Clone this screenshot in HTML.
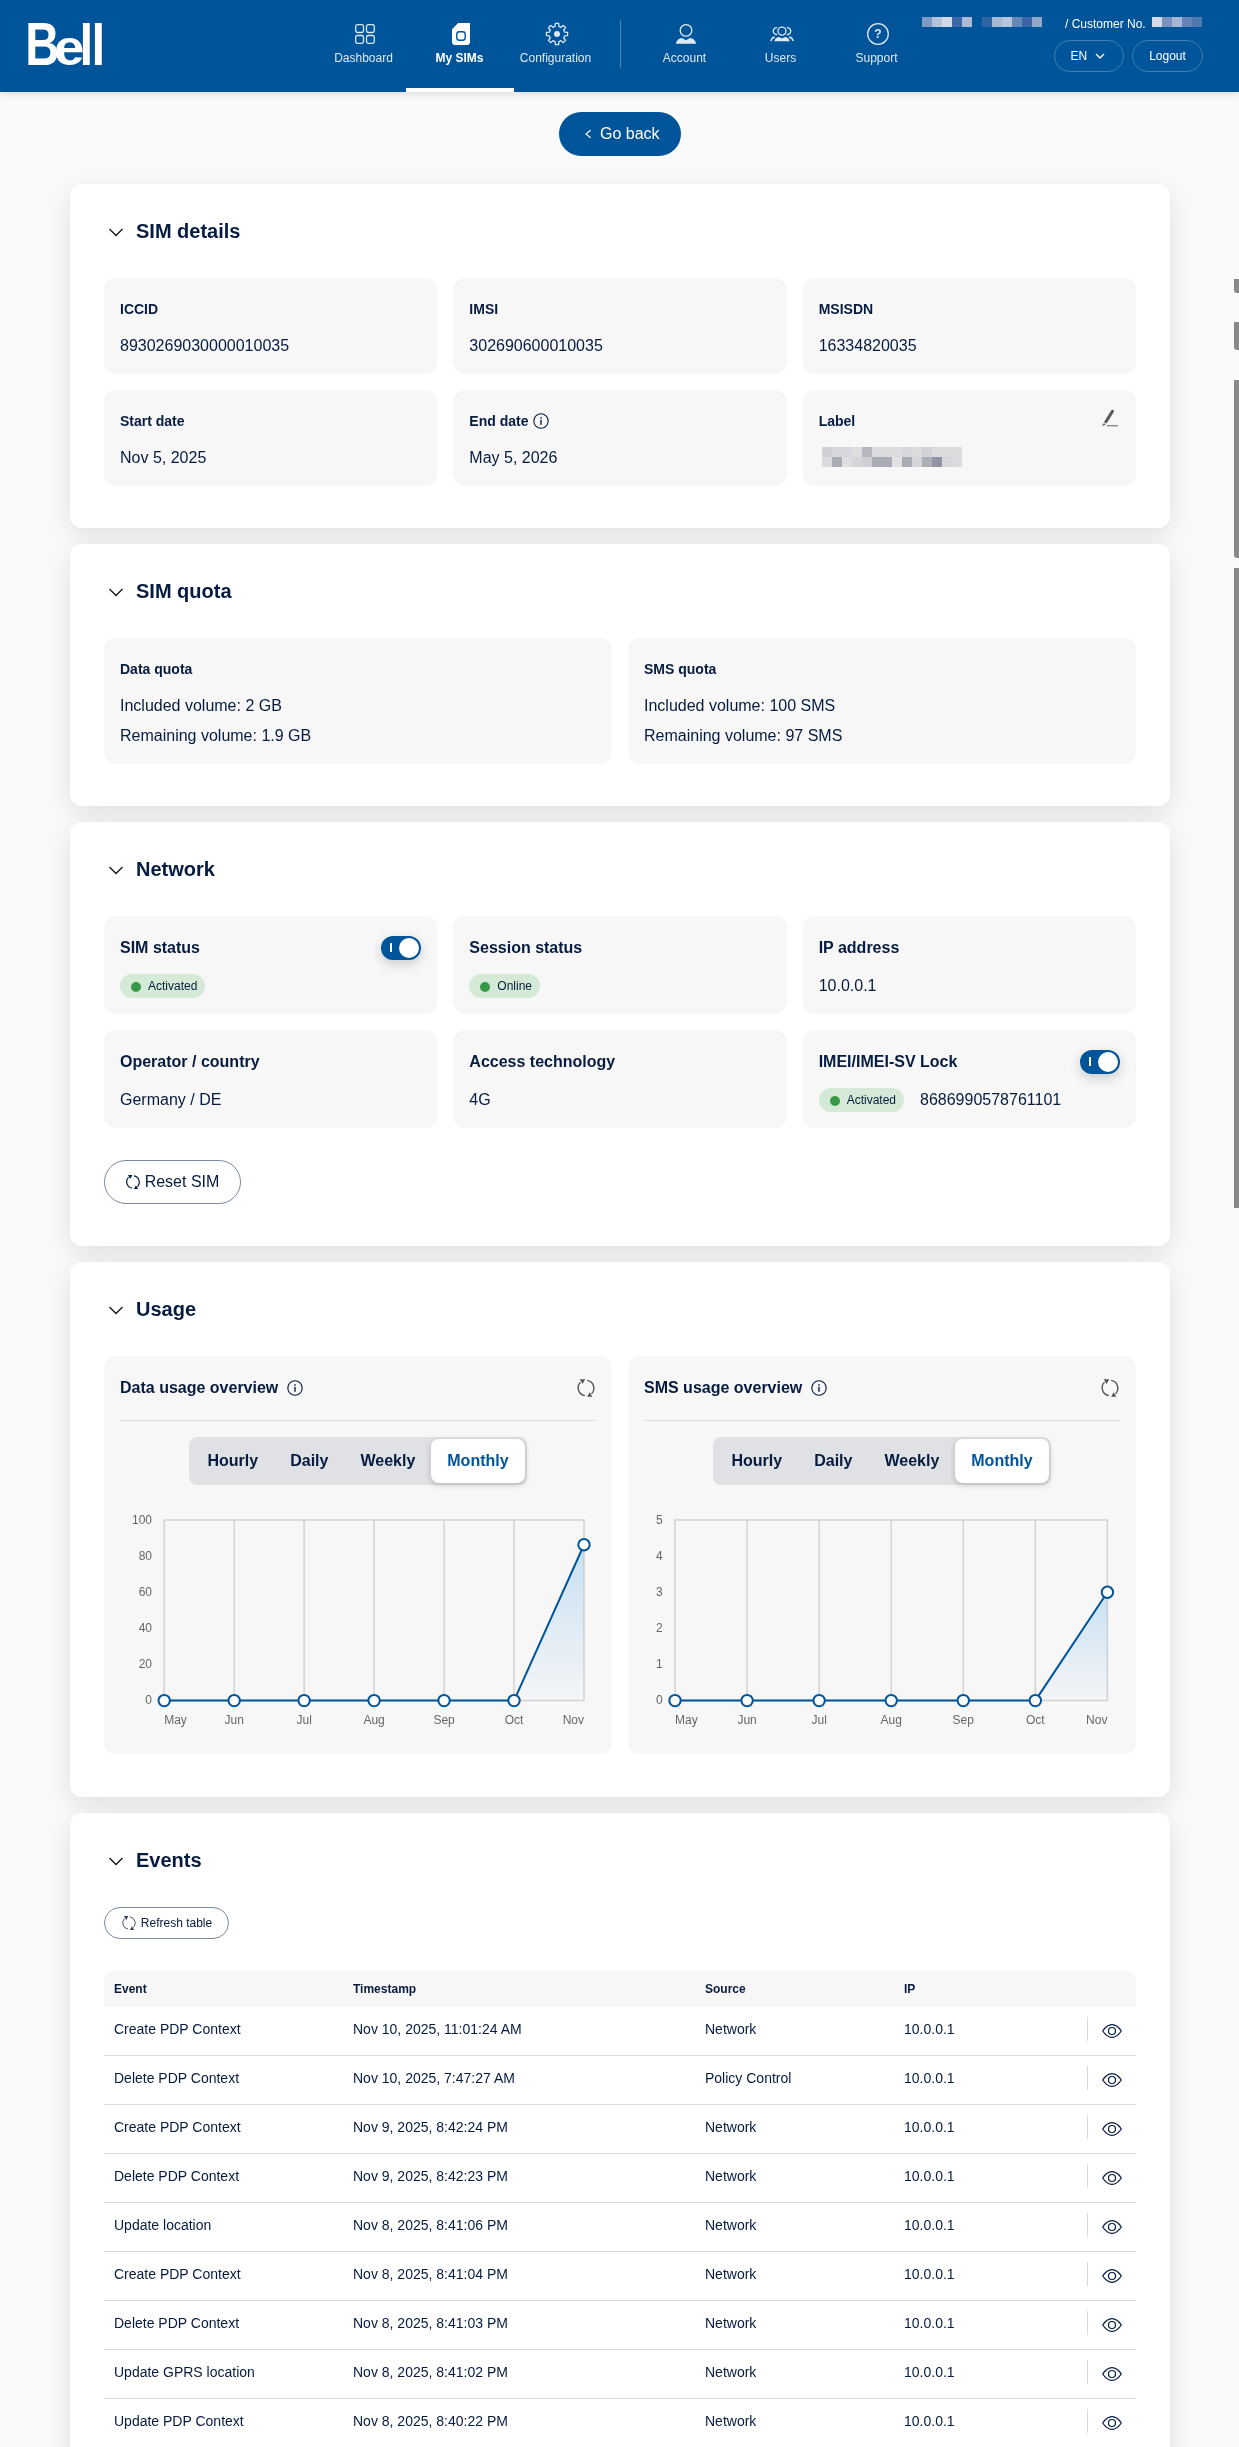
<!DOCTYPE html>
<html lang="en">
<head>
<meta charset="utf-8">
<title>Bell - SIM details</title>
<style>
*{box-sizing:border-box;margin:0;padding:0}
html,body{width:1239px;height:2447px;overflow:hidden}
body{background:#fafafa;font-family:"Liberation Sans",Arial,Helvetica,sans-serif;color:#051b3f;position:relative}
.hdr{position:absolute;left:0;top:0;width:1239px;height:92px;background:#00549a;box-shadow:0 2px 8px rgba(0,0,0,.12)}
.logo{position:absolute;left:0;top:0;width:120px;height:100px;color:#fff;font-weight:bold;font-size:100px;line-height:100px;white-space:nowrap}
.logo span{display:inline-block;width:0;transform-origin:0 0}
.nav{position:absolute;top:0;height:92px;width:108px;text-align:center;color:#dfe9f3;font-size:12px}
.nav svg{position:absolute;left:43px;top:22px;width:24px;height:24px}
.nav span{position:absolute;left:-1px;right:0;top:51px;line-height:14px}
.nav.act{color:#fff;font-weight:bold;border-bottom:4px solid #fff}
.vdiv{position:absolute;left:620px;top:20px;width:1px;height:48px;background:#4d87b8}
.px{position:absolute;height:10px}
.px i{display:block;float:left;width:10px;height:10px}
.cust{position:absolute;left:1065px;top:17px;font-size:12px;line-height:14px;color:#fff}
.hbtn{position:absolute;top:40px;height:32px;border:1px solid #3f7db3;border-radius:16px;color:#fff;font-size:12px;line-height:30px;text-align:center}
.goback{position:absolute;left:559px;top:112px;width:122px;height:44px;border-radius:22px;background:#00549a;color:#fff;font-size:16px;line-height:44px;text-align:center}
.card{position:absolute;left:70px;width:1100px;background:#fff;border-radius:12px;box-shadow:0 8px 28px rgba(0,0,0,.11)}
.card h2{position:absolute;left:66px;top:34px;font-size:20px;line-height:26px;font-weight:bold;color:#051b3f}
.chev{position:absolute;left:38px;top:41.600px;width:16px;height:12px}
.box{position:absolute;background:#f7f7f7;border-radius:12px}
.box .l{position:absolute;left:16px;top:22px;font-size:14px;line-height:18px;font-weight:bold}
.box .v{position:absolute;left:16px;top:58px;font-size:16px;line-height:20px}
.box .l2{position:absolute;left:16px;top:22px;font-size:16px;line-height:20px;font-weight:bold}
.box .v2{position:absolute;left:16px;top:60px;font-size:16px;line-height:20px}

.px.g i{}
.badge{display:inline-block;height:24px;border-radius:12px;background:#d4ead6;font-size:12px;line-height:24px;padding:0 8px 0 28px;position:relative;color:#051b3f;vertical-align:top}
.badge i{position:absolute;left:11px;top:7.500px;width:10px;height:10px;border-radius:50%;background:#36994a}
.bw{position:absolute;left:16px;top:58px;height:24px;white-space:nowrap}
.imei{font-size:16px;line-height:24px;margin-left:16px;vertical-align:top}
.tog{position:absolute;right:16px;top:20px;width:40px;height:24px;border-radius:12px;background:#00549a;box-shadow:0 4px 12px rgba(0,0,0,.18)}
.tog b{position:absolute;left:9px;top:7px;width:2px;height:9px;background:#fff}
.tog i{position:absolute;right:2px;top:2px;width:20px;height:20px;border-radius:50%;background:#fff}
.obtn{position:absolute;border:1px solid #7c8aa0;text-align:center;color:#051b3f;background:#fff}

.hr{position:absolute;left:16px;top:64px;width:476px;height:1px;background:#dcdcdc}
.seg{position:absolute;left:85px;top:81px;height:48px;border-radius:8px;background:#e0e1e5;padding:2px 2.500px 2px 2.500px;white-space:nowrap;font-size:0}
.seg span{display:inline-block;height:44px;line-height:44px;padding:0 16px;font-size:16px;font-weight:bold;color:#051b3f;border-radius:8px}
.seg span.on{background:#fff;color:#00549a;box-shadow:0 2px 6px rgba(0,0,0,.2)}
.th{position:absolute;left:34px;top:158px;width:1032px;height:35.500px;background:#f7f7f7;border-radius:10px 10px 0 0;font-size:12px;font-weight:bold;line-height:37px}
.th span,.tr span{position:absolute;top:0;white-space:nowrap}
.tr{position:absolute;left:34px;width:1032px;height:49px;border-bottom:1px solid #d9d9d9;font-size:14px;line-height:44px}
.tr b{position:absolute;left:983px;top:10.500px;width:1px;height:24px;background:#d9d9d9}
.eye{position:absolute;left:998px;top:17.500px;width:20px;height:14px}
.sb{position:absolute;left:1234px;width:6px;background:#888;border-radius:0 0 0 3px}
</style>
</head>
<body><div id="wrap" style="position:absolute;left:0;top:0;width:1239px;height:2447px;will-change:transform">
<div class="hdr">
  <div class="logo" aria-label="Bell"><span style="transform:translate(25.200px,13.080px) scale(.4738,.6138)">B</span><span style="transform:translate(54.120px,22.760px) scale(.5458,.498)">e</span><span style="transform:translate(79.500px,15.940px) scale(.493,.58)">l</span><span style="transform:translate(91.610px,15.940px) scale(.493,.58)">l</span></div>
  <div class="nav" style="left:310px"><svg viewBox="0 0 24 24" fill="none" stroke="#dfe9f3" stroke-width="1.3"><rect x="2.7" y="2.7" width="7.8" height="7.8" rx="1.8"/><rect x="13.5" y="2.7" width="7.8" height="7.8" rx="1.8"/><rect x="2.7" y="13.5" width="7.8" height="7.8" rx="1.8"/><rect x="13.5" y="13.5" width="7.8" height="7.8" rx="1.8"/></svg><span>Dashboard</span></div>
  <div class="nav act" style="left:406px"><svg viewBox="0 0 24 24"><path d="M9.200 1H21V21L19.200 23H4.800L3 21V7.300z" fill="#fff"/><rect x="7.800" y="9.800" width="8.400" height="8.400" rx="2.400" fill="#fff" stroke="#00549a" stroke-width="1.400"/></svg><span>My SIMs</span></div>
  <div class="nav" style="left:502px"><svg viewBox="0 0 24 24" fill="none" stroke="#dfe9f3" stroke-width="1.300" stroke-linejoin="round"><path d="M10.07 4.44 L10.40 1.42 L13.60 1.42 L13.93 4.44 L15.98 5.29 L18.35 3.39 L20.61 5.65 L18.71 8.02 L19.56 10.07 L22.58 10.40 L22.58 13.60 L19.56 13.93 L18.71 15.98 L20.61 18.35 L18.35 20.61 L15.98 18.71 L13.93 19.56 L13.60 22.58 L10.40 22.58 L10.07 19.56 L8.02 18.71 L5.65 20.61 L3.39 18.35 L5.29 15.98 L4.44 13.93 L1.42 13.60 L1.42 10.40 L4.44 10.07 L5.29 8.02 L3.39 5.65 L5.65 3.39 L8.02 5.29Z"/><circle cx="12" cy="12" r="3" fill="#dfe9f3" stroke="none"/></svg><span>Configuration</span></div>
  <div class="vdiv"></div>
  <div class="nav" style="left:631px"><svg viewBox="0 0 24 24"><circle cx="12" cy="8.400" r="5.800" fill="none" stroke="#dfe9f3" stroke-width="1.300"/><path d="M1.800 21.700c.6-3.300 3-5.300 6.300-5.700L12 18.300l3.900-2.300c3.300.4 5.700 2.400 6.300 5.700z" fill="#dfe9f3"/></svg><span>Account</span></div>
  <div class="nav" style="left:727px"><svg viewBox="0 0 24 24" fill="none" stroke="#dfe9f3" stroke-width="1.300"><circle cx="12" cy="9.100" r="4"/><path d="M7.180 5.740A3.400 3.400 0 1 0 7.180 12.460M16.820 5.740A3.400 3.400 0 1 1 16.820 12.460M.8 19.200c.4-2.300 1.800-3.700 4-4.200M23.200 19.200c-.4-2.300-1.800-3.700-4-4.200"/><path d="M4.300 19.200c.5-2.600 2.300-4 4.700-4.300l3 1.700 3-1.700c2.400.3 4.200 1.700 4.700 4.300z" fill="#dfe9f3" stroke="none"/></svg><span>Users</span></div>
  <div class="nav" style="left:823px"><svg viewBox="0 0 24 24"><circle cx="12" cy="12" r="10.300" fill="none" stroke="#dfe9f3" stroke-width="1.300"/><text x="12" y="16.300" text-anchor="middle" font-family="Liberation Sans, sans-serif" font-size="12" font-weight="bold" fill="#dfe9f3">?</text></svg><span>Support</span></div>
  <div class="px" style="left:922px;top:17px"><i style="background:#7e99c2"></i><i style="background:#b3c3da"></i><i style="background:#d3dbe9"></i><i style="background:#3b68a8"></i><i style="background:#a9bbd6"></i></div>
  <div class="px" style="left:982px;top:17px"><i style="background:#2f64a5"></i><i style="background:#a4b9d4"></i><i style="background:#b5c6dc"></i><i style="background:#6688b9"></i><i style="background:#3a65a6"></i><i style="background:#8fa9cb"></i></div>
  <div class="cust">/ Customer No.</div>
  <div class="px" style="left:1152px;top:17px"><i style="background:#d5dbe9"></i><i style="background:#7b92bd"></i><i style="background:#a7b7d3"></i><i style="background:#6685b6"></i><i style="background:#4f7ab1"></i></div>
  <div class="hbtn" style="left:1054px;width:70px;text-indent:-3px">EN <svg width="10" height="6" viewBox="0 0 10 6" style="margin-left:4px;vertical-align:1px"><path d="M1 1l4 4 4-4" fill="none" stroke="#fff" stroke-width="1.400"/></svg></div>
  <div class="hbtn" style="left:1132px;width:71px">Logout</div>
</div>
<div class="goback"><svg width="6" height="10" viewBox="0 0 6 10" style="position:absolute;left:26px;top:17px"><path d="M5.600 1.200L.900 5l4.700 3.800" fill="none" stroke="#fff" stroke-width="1.100"/></svg><span style="position:absolute;left:41px;top:0">Go back</span></div>

<div class="card" id="c1" style="top:184px;height:344px">
  <svg class="chev" viewBox="0 0 16 12"><path d="M1.500 3l6.500 6.500L14.500 3" fill="none" stroke="#1a1a1a" stroke-width="1.400"/></svg><h2>SIM details</h2><div class="box" style="left:34px;top:94px;width:333.333px;height:96px"><div class="l">ICCID</div><div class="v">8930269030000010035</div></div><div class="box" style="left:383.333px;top:94px;width:333.333px;height:96px"><div class="l">IMSI</div><div class="v">302690600010035</div></div><div class="box" style="left:732.667px;top:94px;width:333.333px;height:96px"><div class="l">MSISDN</div><div class="v">16334820035</div></div><div class="box" style="left:34px;top:206px;width:333.333px;height:96px"><div class="l">Start date</div><div class="v">Nov 5, 2025</div></div><div class="box" style="left:383.333px;top:206px;width:333.333px;height:96px"><div class="l">End date <svg class="info" style="position:absolute;left:64px;top:1px;width:16px;height:16px" viewBox="0 0 16 16"><circle cx="8" cy="8" r="7.2" fill="none" stroke="#051b3f" stroke-width="1.1"/><rect x="7.3" y="6.800" width="1.400" height="5" fill="#051b3f"/><rect x="7.300" y="4.200" width="1.400" height="1.500" fill="#051b3f"/></svg></div><div class="v">May 5, 2026</div></div><div class="box" style="left:732.667px;top:206px;width:333.333px;height:96px"><div class="l">Label</div><svg style="position:absolute;left:297.330px;top:19px;width:20px;height:20px" viewBox="1100 409 20 20"><path d="M1112.500 411.300L1105.900 421.800" stroke="#5a5a5a" stroke-width="3.100" stroke-linecap="round" fill="none"/><path d="M1101.900 426l2-3.100 1.700 1.800z" fill="#5a5a5a"/><path d="M1106.800 425.700H1117.800" stroke="#8a8a8a" stroke-width="1.400"/></svg><div class="px" style="left:19px;top:57px;width:140px;height:20px"><i style="background:#cfcfd4"></i><i style="background:#d8d8dc"></i><i style="background:#d8d8dc"></i><i style="background:#dedee1"></i><i style="background:#b5b6be"></i><i style="background:#dcdcdf"></i><i style="background:#dcdcdf"></i><i style="background:#dcdcdf"></i><i style="background:#d8d8dc"></i><i style="background:#dcdcdf"></i><i style="background:#d2d3d8"></i><i style="background:#dcdcdf"></i><i style="background:#dcdcdf"></i><i style="background:#dcdcdf"></i><i style="background:#dcdcdf"></i><i style="background:#a9abb5"></i><i style="background:#dedee1"></i><i style="background:#d6d6da"></i><i style="background:#cfcfd5"></i><i style="background:#a9abb5"></i><i style="background:#a9abb5"></i><i style="background:#e2e2e4"></i><i style="background:#a9abb5"></i><i style="background:#d6d6da"></i><i style="background:#adafb8"></i><i style="background:#9194a1"></i><i style="background:#d8d8dc"></i><i style="background:#dcdcdf"></i></div></div>
</div>
<div class="card" id="c2" style="top:544px;height:262px">
  <svg class="chev" viewBox="0 0 16 12"><path d="M1.500 3l6.500 6.500L14.500 3" fill="none" stroke="#1a1a1a" stroke-width="1.400"/></svg><h2>SIM quota</h2><div class="box" style="left:34px;top:94px;width:508px;height:126px"><div class="l">Data quota</div><div class="v">Included volume: 2 GB</div><div class="v" style="top:88px">Remaining volume: 1.9 GB</div></div><div class="box" style="left:558px;top:94px;width:508px;height:126px"><div class="l">SMS quota</div><div class="v">Included volume: 100 SMS</div><div class="v" style="top:88px">Remaining volume: 97 SMS</div></div>
</div>
<div class="card" id="c3" style="top:822px;height:424px">
  <svg class="chev" viewBox="0 0 16 12"><path d="M1.500 3l6.500 6.500L14.500 3" fill="none" stroke="#1a1a1a" stroke-width="1.400"/></svg><h2>Network</h2><div class="box" style="left:34px;top:94px;width:333.333px;height:98px"><div class="l2">SIM status</div><div class="tog"><b></b><i></i></div><div class="bw"><span class="badge"><i></i>Activated</span></div></div><div class="box" style="left:383.333px;top:94px;width:333.333px;height:98px"><div class="l2">Session status</div><div class="bw"><span class="badge"><i></i>Online</span></div></div><div class="box" style="left:732.667px;top:94px;width:333.333px;height:98px"><div class="l2">IP address</div><div class="v2">10.0.0.1</div></div><div class="box" style="left:34px;top:208px;width:333.333px;height:98px"><div class="l2">Operator / country</div><div class="v2">Germany / DE</div></div><div class="box" style="left:383.333px;top:208px;width:333.333px;height:98px"><div class="l2">Access technology</div><div class="v2">4G</div></div><div class="box" style="left:732.667px;top:208px;width:333.333px;height:98px"><div class="l2">IMEI/IMEI-SV Lock</div><div class="tog"><b></b><i></i></div><div class="bw"><span class="badge"><i></i>Activated</span><span class="imei">8686990578761101</span></div></div><div class="obtn" style="left:34px;top:338px;width:137px;height:44px;line-height:42px;font-size:16px;border-radius:22px"><svg viewBox="0 0 20 20" style="width:16px;height:16px;vertical-align:-3px;margin-left:-1px;margin-right:4px;color:#051b3f" fill="none" stroke="#051b3f" stroke-width="1.500"><path d="M8.870 17.600A7.800 7.800 0 0 1 4.500 4.300M11.130 2.400A7.800 7.800 0 0 1 15.500 15.700"/><path d="M3.700 1.200H9.200L6.600 6.100zM11.130 18.800H16.300L13.700 14.200z" fill="currentColor" stroke="none"/></svg>Reset SIM</div>
</div>
<div class="card" id="c4" style="top:1262px;height:535px">
  <svg class="chev" viewBox="0 0 16 12"><path d="M1.500 3l6.500 6.500L14.500 3" fill="none" stroke="#1a1a1a" stroke-width="1.400"/></svg><h2>Usage</h2><div class="box" style="left:34px;top:94px;width:508px;height:398px"><svg style="position:absolute;left:0;top:0" width="508" height="398" viewBox="0 0 508 398"><defs><linearGradient id="g1" x1="0" y1="0" x2="0" y2="1"><stop offset="0" stop-color="#8fc3ea" stop-opacity=".45"/><stop offset="1" stop-color="#8fc3ea" stop-opacity=".03"/></linearGradient></defs><g stroke="#d2d2d2" stroke-width="1.500" fill="none"><path d="M60.20 164.00V344.60"/><path d="M130.17 164.00V344.60"/><path d="M200.13 164.00V344.60"/><path d="M270.10 164.00V344.60"/><path d="M340.07 164.00V344.60"/><path d="M410.03 164.00V344.60"/><path d="M480.00 164.00V344.60"/><path d="M59.50 164.00H480.70"/><path d="M60.20 344.60H480.70"/></g><path d="M410.03 344.60L480.00 188.74V344.60Z" fill="url(#g1)"/><path d="M60.20 344.60H410.03L480.00 188.74" fill="none" stroke="#00549a" stroke-width="2" stroke-linejoin="round"/><g fill="#fff" stroke="#00549a" stroke-width="2"><circle cx="60.20" cy="344.60" r="5.700"/><circle cx="130.17" cy="344.60" r="5.700"/><circle cx="200.13" cy="344.60" r="5.700"/><circle cx="270.10" cy="344.60" r="5.700"/><circle cx="340.07" cy="344.60" r="5.700"/><circle cx="410.03" cy="344.60" r="5.700"/><circle cx="480.00" cy="188.74" r="5.700"/></g><g font-family="Liberation Sans, sans-serif" font-size="12" fill="#666"><text x="48.00" y="168.20" text-anchor="end">100</text><text x="48.00" y="204.20" text-anchor="end">80</text><text x="48.00" y="240.20" text-anchor="end">60</text><text x="48.00" y="276.20" text-anchor="end">40</text><text x="48.00" y="312.20" text-anchor="end">20</text><text x="48.00" y="348.20" text-anchor="end">0</text><text x="60.20" y="368.20" text-anchor="start">May</text><text x="130.17" y="368.20" text-anchor="middle">Jun</text><text x="200.13" y="368.20" text-anchor="middle">Jul</text><text x="270.10" y="368.20" text-anchor="middle">Aug</text><text x="340.07" y="368.20" text-anchor="middle">Sep</text><text x="410.03" y="368.20" text-anchor="middle">Oct</text><text x="480.00" y="368.20" text-anchor="end">Nov</text></g></svg><div class="l2" style="top:22px">Data usage overview</div><svg class="info" style="position:absolute;left:183px;top:24px;width:16px;height:16px" viewBox="0 0 16 16"><circle cx="8" cy="8" r="7.2" fill="none" stroke="#051b3f" stroke-width="1.1"/><rect x="7.3" y="6.800" width="1.400" height="5" fill="#051b3f"/><rect x="7.300" y="4.200" width="1.400" height="1.500" fill="#051b3f"/></svg><svg viewBox="0 0 20 20" style="width:20px;height:20px;position:absolute;left:472px;top:22px;color:#555" fill="none" stroke="#555" stroke-width="1.400"><path d="M8.870 17.600A7.800 7.800 0 0 1 4.500 4.300M11.130 2.400A7.800 7.800 0 0 1 15.500 15.700"/><path d="M3.700 1.200H9.200L6.600 6.100zM11.130 18.800H16.300L13.700 14.200z" fill="currentColor" stroke="none"/></svg><div class="hr"></div><div class="seg"><span>Hourly</span><span>Daily</span><span>Weekly</span><span class="on">Monthly</span></div></div><div class="box" style="left:558px;top:94px;width:508px;height:398px"><svg style="position:absolute;left:0;top:0" width="508" height="398" viewBox="0 0 508 398"><defs><linearGradient id="g2" x1="0" y1="0" x2="0" y2="1"><stop offset="0" stop-color="#8fc3ea" stop-opacity=".45"/><stop offset="1" stop-color="#8fc3ea" stop-opacity=".03"/></linearGradient></defs><g stroke="#d2d2d2" stroke-width="1.500" fill="none"><path d="M47.00 164.00V344.60"/><path d="M119.07 164.00V344.60"/><path d="M191.13 164.00V344.60"/><path d="M263.20 164.00V344.60"/><path d="M335.27 164.00V344.60"/><path d="M407.33 164.00V344.60"/><path d="M479.40 164.00V344.60"/><path d="M46.30 164.00H480.10"/><path d="M47.00 344.60H480.10"/></g><path d="M407.33 344.60L479.40 236.24V344.60Z" fill="url(#g2)"/><path d="M47.00 344.60H407.33L479.40 236.24" fill="none" stroke="#00549a" stroke-width="2" stroke-linejoin="round"/><g fill="#fff" stroke="#00549a" stroke-width="2"><circle cx="47.00" cy="344.60" r="5.700"/><circle cx="119.07" cy="344.60" r="5.700"/><circle cx="191.13" cy="344.60" r="5.700"/><circle cx="263.20" cy="344.60" r="5.700"/><circle cx="335.27" cy="344.60" r="5.700"/><circle cx="407.33" cy="344.60" r="5.700"/><circle cx="479.40" cy="236.24" r="5.700"/></g><g font-family="Liberation Sans, sans-serif" font-size="12" fill="#666"><text x="34.80" y="168.20" text-anchor="end">5</text><text x="34.80" y="204.20" text-anchor="end">4</text><text x="34.80" y="240.20" text-anchor="end">3</text><text x="34.80" y="276.20" text-anchor="end">2</text><text x="34.80" y="312.20" text-anchor="end">1</text><text x="34.80" y="348.20" text-anchor="end">0</text><text x="47.00" y="368.20" text-anchor="start">May</text><text x="119.07" y="368.20" text-anchor="middle">Jun</text><text x="191.13" y="368.20" text-anchor="middle">Jul</text><text x="263.20" y="368.20" text-anchor="middle">Aug</text><text x="335.27" y="368.20" text-anchor="middle">Sep</text><text x="407.33" y="368.20" text-anchor="middle">Oct</text><text x="479.40" y="368.20" text-anchor="end">Nov</text></g></svg><div class="l2" style="top:22px">SMS usage overview</div><svg class="info" style="position:absolute;left:183px;top:24px;width:16px;height:16px" viewBox="0 0 16 16"><circle cx="8" cy="8" r="7.2" fill="none" stroke="#051b3f" stroke-width="1.1"/><rect x="7.3" y="6.800" width="1.400" height="5" fill="#051b3f"/><rect x="7.300" y="4.200" width="1.400" height="1.500" fill="#051b3f"/></svg><svg viewBox="0 0 20 20" style="width:20px;height:20px;position:absolute;left:472px;top:22px;color:#555" fill="none" stroke="#555" stroke-width="1.400"><path d="M8.870 17.600A7.800 7.800 0 0 1 4.500 4.300M11.130 2.400A7.800 7.800 0 0 1 15.500 15.700"/><path d="M3.700 1.200H9.200L6.600 6.100zM11.130 18.800H16.300L13.700 14.200z" fill="currentColor" stroke="none"/></svg><div class="hr"></div><div class="seg"><span>Hourly</span><span>Daily</span><span>Weekly</span><span class="on">Monthly</span></div></div>
</div>
<div class="card" id="c5" style="top:1813px;height:700px">
  <svg class="chev" viewBox="0 0 16 12"><path d="M1.500 3l6.500 6.500L14.500 3" fill="none" stroke="#1a1a1a" stroke-width="1.400"/></svg><h2>Events</h2><div class="obtn" style="left:34px;top:94px;width:125px;height:32px;line-height:30px;font-size:12px;border-radius:16px"><svg viewBox="0 0 20 20" style="width:16px;height:16px;vertical-align:-4px;margin-right:4px;color:#333f55" fill="none" stroke="#333f55" stroke-width="1.100"><path d="M8.870 17.600A7.800 7.800 0 0 1 4.500 4.300M11.130 2.400A7.800 7.800 0 0 1 15.500 15.700"/><path d="M3.700 1.200H9.200L6.600 6.100zM11.130 18.800H16.300L13.700 14.200z" fill="currentColor" stroke="none"/></svg>Refresh table</div><div class="th"><span style="left:10px">Event</span><span style="left:249px">Timestamp</span><span style="left:601px">Source</span><span style="left:800px">IP</span></div><div class="tr" style="top:193.5px"><span style="left:10px">Create PDP Context</span><span style="left:249px">Nov 10, 2025, 11:01:24 AM</span><span style="left:601px">Network</span><span style="left:800px">10.0.0.1</span><b></b><svg class="eye" viewBox="0 0 20 14" fill="none" stroke="#051b3f" stroke-width="1.200" stroke-linejoin="round"><path d="M.7 7C3.600 2.600 6.600.700 10 .700S16.400 2.600 19.300 7C16.400 11.400 13.400 13.300 10 13.300S3.600 11.400.700 7z"/><circle cx="10" cy="7" r="3.500"/></svg></div><div class="tr" style="top:242.5px"><span style="left:10px">Delete PDP Context</span><span style="left:249px">Nov 10, 2025, 7:47:27 AM</span><span style="left:601px">Policy Control</span><span style="left:800px">10.0.0.1</span><b></b><svg class="eye" viewBox="0 0 20 14" fill="none" stroke="#051b3f" stroke-width="1.200" stroke-linejoin="round"><path d="M.7 7C3.600 2.600 6.600.700 10 .700S16.400 2.600 19.300 7C16.400 11.400 13.400 13.300 10 13.300S3.600 11.400.700 7z"/><circle cx="10" cy="7" r="3.500"/></svg></div><div class="tr" style="top:291.5px"><span style="left:10px">Create PDP Context</span><span style="left:249px">Nov 9, 2025, 8:42:24 PM</span><span style="left:601px">Network</span><span style="left:800px">10.0.0.1</span><b></b><svg class="eye" viewBox="0 0 20 14" fill="none" stroke="#051b3f" stroke-width="1.200" stroke-linejoin="round"><path d="M.7 7C3.600 2.600 6.600.700 10 .700S16.400 2.600 19.300 7C16.400 11.400 13.400 13.300 10 13.300S3.600 11.400.700 7z"/><circle cx="10" cy="7" r="3.500"/></svg></div><div class="tr" style="top:340.5px"><span style="left:10px">Delete PDP Context</span><span style="left:249px">Nov 9, 2025, 8:42:23 PM</span><span style="left:601px">Network</span><span style="left:800px">10.0.0.1</span><b></b><svg class="eye" viewBox="0 0 20 14" fill="none" stroke="#051b3f" stroke-width="1.200" stroke-linejoin="round"><path d="M.7 7C3.600 2.600 6.600.700 10 .700S16.400 2.600 19.300 7C16.400 11.400 13.400 13.300 10 13.300S3.600 11.400.700 7z"/><circle cx="10" cy="7" r="3.500"/></svg></div><div class="tr" style="top:389.5px"><span style="left:10px">Update location</span><span style="left:249px">Nov 8, 2025, 8:41:06 PM</span><span style="left:601px">Network</span><span style="left:800px">10.0.0.1</span><b></b><svg class="eye" viewBox="0 0 20 14" fill="none" stroke="#051b3f" stroke-width="1.200" stroke-linejoin="round"><path d="M.7 7C3.600 2.600 6.600.700 10 .700S16.400 2.600 19.300 7C16.400 11.400 13.400 13.300 10 13.300S3.600 11.400.700 7z"/><circle cx="10" cy="7" r="3.500"/></svg></div><div class="tr" style="top:438.5px"><span style="left:10px">Create PDP Context</span><span style="left:249px">Nov 8, 2025, 8:41:04 PM</span><span style="left:601px">Network</span><span style="left:800px">10.0.0.1</span><b></b><svg class="eye" viewBox="0 0 20 14" fill="none" stroke="#051b3f" stroke-width="1.200" stroke-linejoin="round"><path d="M.7 7C3.600 2.600 6.600.700 10 .700S16.400 2.600 19.300 7C16.400 11.400 13.400 13.300 10 13.300S3.600 11.400.700 7z"/><circle cx="10" cy="7" r="3.500"/></svg></div><div class="tr" style="top:487.5px"><span style="left:10px">Delete PDP Context</span><span style="left:249px">Nov 8, 2025, 8:41:03 PM</span><span style="left:601px">Network</span><span style="left:800px">10.0.0.1</span><b></b><svg class="eye" viewBox="0 0 20 14" fill="none" stroke="#051b3f" stroke-width="1.200" stroke-linejoin="round"><path d="M.7 7C3.600 2.600 6.600.700 10 .700S16.400 2.600 19.300 7C16.400 11.400 13.400 13.300 10 13.300S3.600 11.400.700 7z"/><circle cx="10" cy="7" r="3.500"/></svg></div><div class="tr" style="top:536.5px"><span style="left:10px">Update GPRS location</span><span style="left:249px">Nov 8, 2025, 8:41:02 PM</span><span style="left:601px">Network</span><span style="left:800px">10.0.0.1</span><b></b><svg class="eye" viewBox="0 0 20 14" fill="none" stroke="#051b3f" stroke-width="1.200" stroke-linejoin="round"><path d="M.7 7C3.600 2.600 6.600.700 10 .700S16.400 2.600 19.300 7C16.400 11.400 13.400 13.300 10 13.300S3.600 11.400.700 7z"/><circle cx="10" cy="7" r="3.500"/></svg></div><div class="tr" style="top:585.5px"><span style="left:10px">Update PDP Context</span><span style="left:249px">Nov 8, 2025, 8:40:22 PM</span><span style="left:601px">Network</span><span style="left:800px">10.0.0.1</span><b></b><svg class="eye" viewBox="0 0 20 14" fill="none" stroke="#051b3f" stroke-width="1.200" stroke-linejoin="round"><path d="M.7 7C3.600 2.600 6.600.700 10 .700S16.400 2.600 19.300 7C16.400 11.400 13.400 13.300 10 13.300S3.600 11.400.700 7z"/><circle cx="10" cy="7" r="3.500"/></svg></div>
</div>
<div class="sb" style="top:279px;height:14px"></div><div class="sb" style="top:322px;height:28px"></div><div class="sb" style="top:380px;height:178px"></div><div class="sb" style="top:568px;height:640px;border-radius:0"></div>
</div></body>
</html>
